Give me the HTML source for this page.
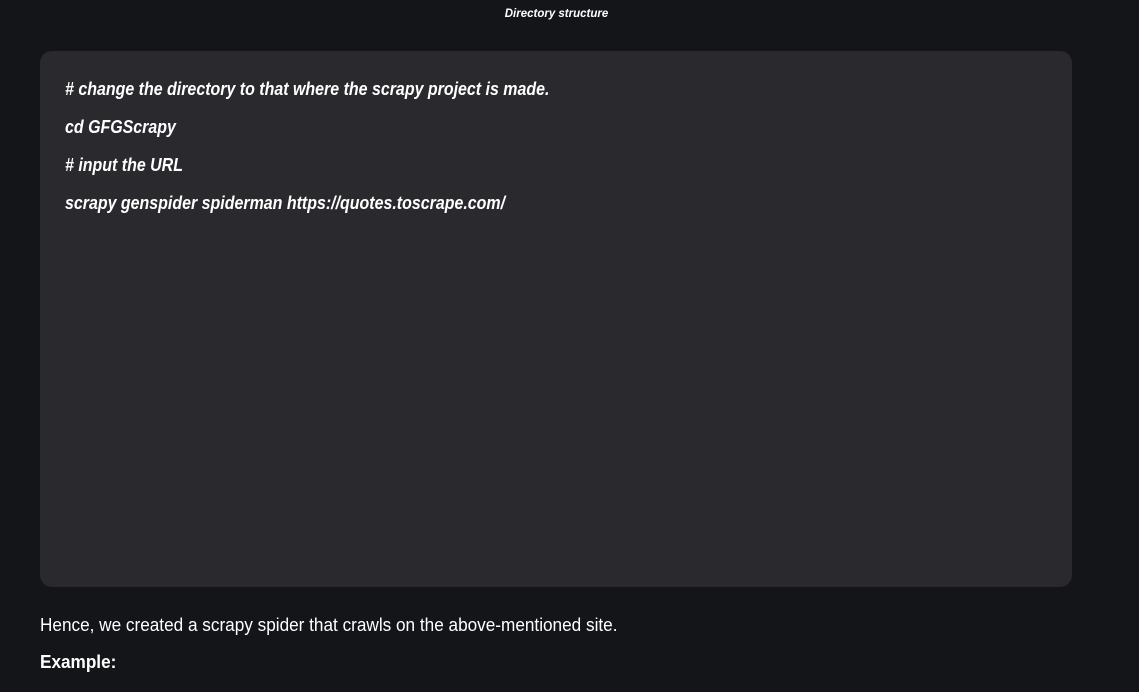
<!DOCTYPE html>
<html><head><style>
html,body{margin:0;padding:0;background:#141519;width:1139px;height:692px;overflow:hidden;color:#fff;font-family:"Liberation Sans",sans-serif;}
.cap{position:absolute;top:8px;left:0;width:1113px;text-align:center;font-size:11.5px;font-style:italic;font-weight:bold;}
.box{position:absolute;left:40px;top:51px;width:1032px;height:536px;background:#2a2a2e;border-radius:12px;}
.ln{position:absolute;left:65px;font-size:18px;font-style:italic;font-weight:bold;white-space:nowrap;transform:scaleX(0.887);transform-origin:0 0;}
.p{position:absolute;left:40px;font-size:18px;white-space:nowrap;transform:scaleX(0.954);transform-origin:0 0;}
</style></head><body>
<div class="cap">Directory structure</div>
<div class="box"></div>
<div class="ln" style="top:79px"># change the directory to that where the scrapy project is made.</div>
<div class="ln" style="top:117px">cd GFGScrapy</div>
<div class="ln" style="top:155px"># input the URL</div>
<div class="ln" style="top:193px">scrapy genspider spiderman https://quotes.toscrape.com/</div>
<div class="p" style="top:615px">Hence, we created a scrapy spider that crawls on the above-mentioned site.</div>
<div class="p" style="top:652px;font-weight:bold">Example:</div>
</body></html>
